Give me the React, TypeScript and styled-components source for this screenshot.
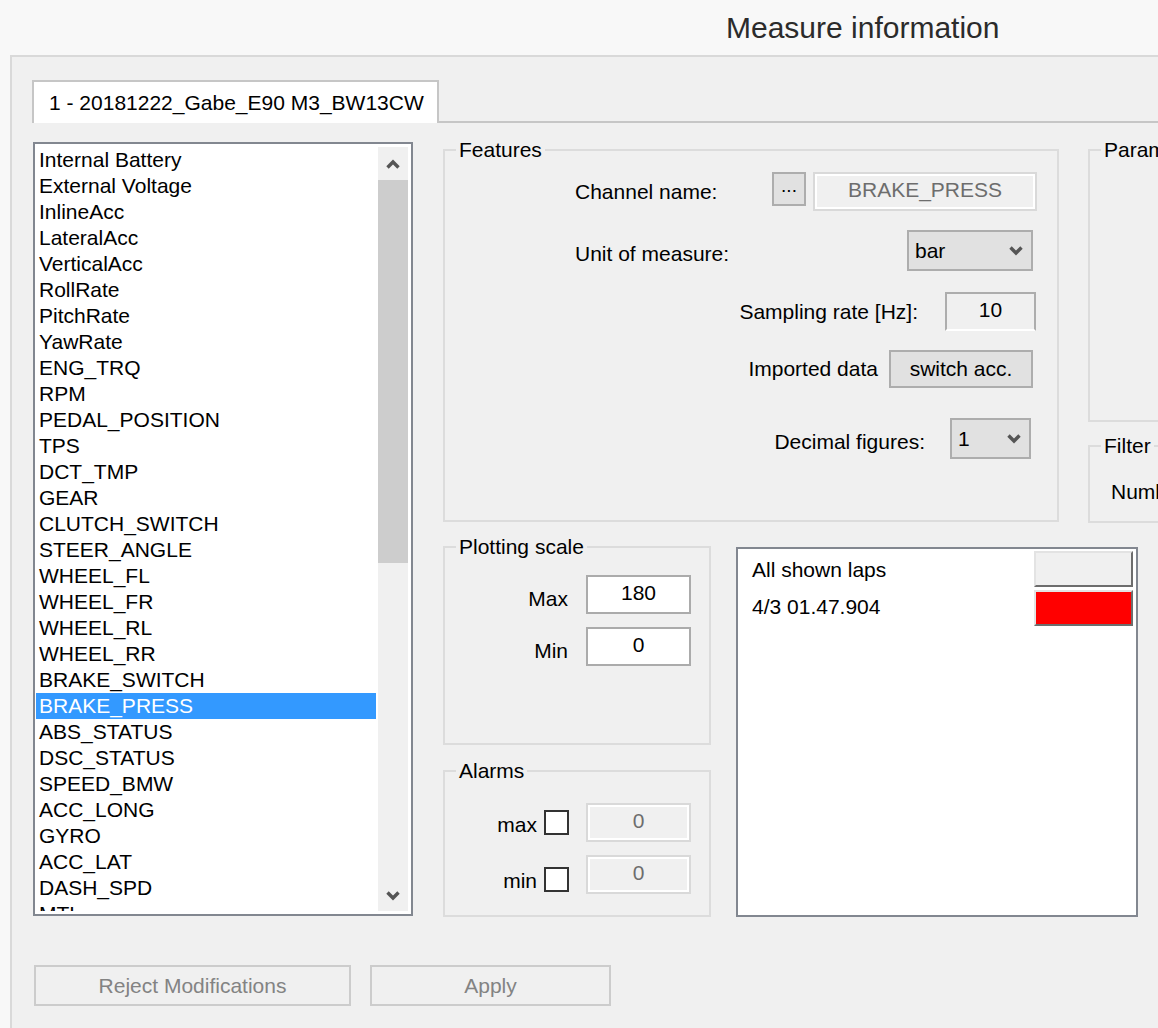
import React from "react";
import styled, { createGlobalStyle } from "styled-components";

const GlobalStyle = createGlobalStyle`
  * { box-sizing: border-box; }
  html, body {
    margin: 0;
    padding: 0;
    background: #f8f8f8;
    overflow: hidden;
  }
  body {
    font-family: Tahoma, "Liberation Sans", Arial, sans-serif;
    font-size: 21px;
    color: #000;
  }
`;

const Page = styled.div`
  width: 1158px;
  height: 1028px;
  overflow: hidden;
  background: #f8f8f8;
`;

const TitleBar = styled.div`
  height: 55px;
  display: flex;
  align-items: center;
  padding-left: 726px;
  font-size: 30px;
  color: #2b2b2b;
  white-space: nowrap;
`;

const Frame = styled.div`
  margin-left: 10px;
  height: 973px;
  background: #f0f0f0;
  border-top: 2px solid #d9d9d9;
  border-left: 2px solid #d9d9d9;
  display: flex;
  flex-direction: column;
  overflow: hidden;
`;

const TabStrip = styled.div`
  display: flex;
  margin-left: 20px;
  padding-top: 23px;
  border-bottom: 2px solid #c6c6c6;
`;

const Tab = styled.div`
  height: 43px;
  margin-bottom: -2px;
  padding: 0 13px 0 15px;
  display: flex;
  align-items: center;
  background: #fff;
  border: 2px solid #c6c6c6;
  border-bottom: none;
  white-space: nowrap;
`;

const Content = styled.div`
  display: flex;
  align-items: flex-start;
  padding: 15px 0 0 21px;
`;

const ListBox = styled.div`
  margin-top: 4px;
  width: 380px;
  height: 774px;
  flex-shrink: 0;
  display: flex;
  background: #fff;
  border: 2px solid #828790;
  padding: 3px 3px 3px 1px;
`;

const Items = styled.div`
  flex: 1;
  overflow: hidden;
`;

const Item = styled.div<{ $selected?: boolean }>`
  height: 26px;
  line-height: 26px;
  padding-left: 3px;
  white-space: nowrap;
  background: ${(p) => (p.$selected ? "#3399ff" : "transparent")};
  color: ${(p) => (p.$selected ? "#fff" : "#000")};
`;

const ScrollBar = styled.div`
  width: 30px;
  margin-left: 2px;
  background: #f0f0f0;
  display: flex;
  flex-direction: column;
`;

const ScrollArrow = styled.div<{ $h: number }>`
  height: ${(p) => p.$h}px;
  display: flex;
  align-items: center;
  justify-content: center;
`;

const Thumb = styled.div`
  height: 383px;
  background: #cdcdcd;
`;

const Track = styled.div`
  flex: 1;
`;

const RightArea = styled.div`
  margin-left: 30px;
  display: flex;
  flex-direction: column;
  flex-shrink: 0;
`;

const HRow = styled.div<{ $top?: number }>`
  display: flex;
  align-items: flex-start;
  margin-top: ${(p) => p.$top ?? 0}px;
`;

const VCol = styled.div<{ $w: number; $left?: number }>`
  width: ${(p) => p.$w}px;
  margin-left: ${(p) => p.$left ?? 0}px;
  display: flex;
  flex-direction: column;
  flex-shrink: 0;
`;

const Group = styled.fieldset<{ $w?: number; $h: number; $top?: number }>`
  margin: ${(p) => p.$top ?? 0}px 0 0 0;
  padding: 0;
  min-width: 0;
  width: ${(p) => (p.$w ? `${p.$w}px` : "auto")};
  height: ${(p) => p.$h}px;
  border: 2px solid #dcdcdc;
  flex-shrink: 0;
`;

const Legend = styled.legend`
  margin-left: 11px;
  padding: 0 3px;
  line-height: 24px;
  font-size: 21px;
  white-space: nowrap;
`;

const FieldRow = styled.div<{ $top: number; $h: number; $right: number; $gap?: number; $left?: number }>`
  display: flex;
  align-items: center;
  justify-content: flex-end;
  height: ${(p) => p.$h}px;
  margin-top: ${(p) => p.$top}px;
  padding-right: ${(p) => p.$right}px;
  padding-left: ${(p) => p.$left ?? 0}px;
  gap: ${(p) => p.$gap ?? 0}px;
  white-space: nowrap;
`;

const Label = styled.span<{ $push?: boolean; $dy?: number }>`
  margin-right: ${(p) => (p.$push ? "auto" : "0")};
  position: relative;
  top: ${(p) => p.$dy ?? 0}px;
`;

const DotsButton = styled.div`
  align-self: flex-start;
  width: 34px;
  height: 34px;
  margin-right: 7px;
  background: #e1e1e1;
  border: 2px solid #adadad;
  display: flex;
  align-items: center;
  justify-content: center;
  padding-bottom: 6px;
  font-size: 19px;
`;

const Field = styled.div<{ $w: number; $h: number; $variant: "disabled" | "plain" | "white" }>`
  width: ${(p) => p.$w}px;
  height: ${(p) => p.$h}px;
  display: flex;
  align-items: center;
  justify-content: center;
  padding-bottom: 4px;
  ${(p) =>
    p.$variant === "disabled"
      ? `background: #f0f0f0; border: 2px solid #d9d9d9; box-shadow: inset 0 0 0 2px #fff; color: #6d6d6d;`
      : p.$variant === "plain"
      ? `background: #f0f0f0; border: 2px solid #adadad; border-bottom-color: #fff; color: #000;`
      : `background: #fff; border: 2px solid #ababab; color: #000;`}
`;

const Combo = styled.div<{ $w: number }>`
  width: ${(p) => p.$w}px;
  height: 41px;
  display: flex;
  align-items: center;
  justify-content: space-between;
  padding: 0 8px 0 6px;
  background: #e1e1e1;
  border: 2px solid #adadad;
`;

const PushButton = styled.div<{ $w: number }>`
  width: ${(p) => p.$w}px;
  height: 38px;
  display: flex;
  align-items: center;
  justify-content: center;
  background: #e1e1e1;
  border: 2px solid #adadad;
`;

const CheckBox = styled.div<{ $dy?: number }>`
  width: 25px;
  height: 25px;
  margin-right: 10px;
  margin-top: ${(p) => p.$dy ?? 0}px;
  background: #fff;
  border: 2px solid #333;
`;

const LineText = styled.div<{ $top: number; $left: number }>`
  margin: ${(p) => p.$top}px 0 0 ${(p) => p.$left}px;
  line-height: 24px;
  white-space: nowrap;
`;

const LapBox = styled.div`
  margin: 12px 0 0 25px;
  width: 402px;
  height: 370px;
  flex-shrink: 0;
  display: flex;
  background: #fff;
  border: 2px solid #828790;
`;

const LapTexts = styled.div`
  flex: 1;
  padding: 2px 0 0 14px;
`;

const LapLine = styled.div`
  height: 37px;
  line-height: 37px;
  white-space: nowrap;
`;

const LapSwatches = styled.div`
  display: flex;
  flex-direction: column;
  gap: 3px;
  padding: 2px 3px 0 0;
`;

const Swatch = styled.div<{ $color: string }>`
  width: 99px;
  height: 36px;
  background: ${(p) => p.$color};
  border: 2px solid;
  border-color: #e3e3e3 #6d6d6d #6d6d6d #e3e3e3;
`;

const Footer = styled.div`
  display: flex;
  gap: 19px;
  margin: 48px 0 0 22px;
`;

const FooterButton = styled.div<{ $w: number }>`
  width: ${(p) => p.$w}px;
  height: 41px;
  display: flex;
  align-items: center;
  justify-content: center;
  background: #f0f0f0;
  border: 2px solid #cccccc;
  color: #838383;
  white-space: nowrap;
`;

const Chevron = ({ up }: { up?: boolean }) => (
  <svg width="14" height="10" viewBox="0 0 14 10">
    <polyline
      points={up ? "1.5,8.5 7,3 12.5,8.5" : "1.5,1.5 7,7 12.5,1.5"}
      fill="none"
      stroke="#555"
      strokeWidth="3.4"
    />
  </svg>
);

const channels = [
  "Internal Battery",
  "External Voltage",
  "InlineAcc",
  "LateralAcc",
  "VerticalAcc",
  "RollRate",
  "PitchRate",
  "YawRate",
  "ENG_TRQ",
  "RPM",
  "PEDAL_POSITION",
  "TPS",
  "DCT_TMP",
  "GEAR",
  "CLUTCH_SWITCH",
  "STEER_ANGLE",
  "WHEEL_FL",
  "WHEEL_FR",
  "WHEEL_RL",
  "WHEEL_RR",
  "BRAKE_SWITCH",
  "BRAKE_PRESS",
  "ABS_STATUS",
  "DSC_STATUS",
  "SPEED_BMW",
  "ACC_LONG",
  "GYRO",
  "ACC_LAT",
  "DASH_SPD",
  "MTL",
];

const App = () => {
  const selected = "BRAKE_PRESS";

  return (
    <Page>
      <GlobalStyle />
      <TitleBar>Measure information</TitleBar>
      <Frame>
        <TabStrip>
          <Tab>1 - 20181222_Gabe_E90 M3_BW13CW</Tab>
        </TabStrip>

        <Content>
          <ListBox>
            <Items>
              {channels.map((c) => (
                <Item key={c} $selected={c === selected}>
                  {c}
                </Item>
              ))}
            </Items>
            <ScrollBar>
              <ScrollArrow $h={33}>
                <Chevron up />
              </ScrollArrow>
              <Thumb />
              <Track />
              <ScrollArrow $h={31}>
                <Chevron />
              </ScrollArrow>
            </ScrollBar>
          </ListBox>

          <RightArea>
            <HRow>
              <Group $w={616} $h={384}>
                <Legend>Features</Legend>
                <FieldRow $top={10} $h={39} $right={20} $left={130}>
                  <Label $push>Channel name:</Label>
                  <DotsButton>...</DotsButton>
                  <Field $w={224} $h={39} $variant="disabled">
                    BRAKE_PRESS
                  </Field>
                </FieldRow>
                <FieldRow $top={19} $h={41} $right={24} $left={130}>
                  <Label $push $dy={3}>
                    Unit of measure:
                  </Label>
                  <Combo $w={126}>
                    <span>bar</span>
                    <Chevron />
                  </Combo>
                </FieldRow>
                <FieldRow $top={21} $h={39} $right={21} $gap={27}>
                  <Label>Sampling rate [Hz]:</Label>
                  <Field $w={91} $h={39} $variant="plain">
                    10
                  </Field>
                </FieldRow>
                <FieldRow $top={19} $h={38} $right={24} $gap={11}>
                  <Label>Imported data</Label>
                  <PushButton $w={144}>switch acc.</PushButton>
                </FieldRow>
                <FieldRow $top={30} $h={41} $right={26} $gap={25}>
                  <Label $dy={3}>Decimal figures:</Label>
                  <Combo $w={81}>
                    <span>1</span>
                    <Chevron />
                  </Combo>
                </FieldRow>
              </Group>

              <VCol $w={220} $left={29}>
                <Group $h={284}>
                  <Legend>Parameters</Legend>
                </Group>
                <Group $h={89} $top={12}>
                  <Legend>Filter</Legend>
                  <LineText $top={22} $left={21}>
                    Number of points
                  </LineText>
                </Group>
              </VCol>
            </HRow>

            <HRow $top={12}>
              <VCol $w={268}>
                <Group $h={210}>
                  <Legend>Plotting scale</Legend>
                  <FieldRow $top={16} $h={39} $right={18} $gap={18}>
                    <Label $dy={4}>Max</Label>
                    <Field $w={105} $h={39} $variant="white">
                      180
                    </Field>
                  </FieldRow>
                  <FieldRow $top={13} $h={39} $right={18} $gap={18}>
                    <Label $dy={4}>Min</Label>
                    <Field $w={105} $h={39} $variant="white">
                      0
                    </Field>
                  </FieldRow>
                </Group>
                <Group $h={158} $top={14}>
                  <Legend>Alarms</Legend>
                  <FieldRow $top={20} $h={39} $right={18} $gap={7}>
                    <Label $dy={2}>max</Label>
                    <CheckBox />
                    <Field $w={105} $h={39} $variant="disabled">
                      0
                    </Field>
                  </FieldRow>
                  <FieldRow $top={13} $h={39} $right={18} $gap={7}>
                    <Label $dy={6}>min</Label>
                    <CheckBox $dy={10} />
                    <Field $w={105} $h={39} $variant="disabled">
                      0
                    </Field>
                  </FieldRow>
                </Group>
              </VCol>

              <LapBox>
                <LapTexts>
                  <LapLine>All shown laps</LapLine>
                  <LapLine>4/3 01.47.904</LapLine>
                </LapTexts>
                <LapSwatches>
                  <Swatch $color="#f0f0f0" />
                  <Swatch $color="#ff0000" />
                </LapSwatches>
              </LapBox>
            </HRow>
          </RightArea>
        </Content>

        <Footer>
          <FooterButton $w={317}>Reject Modifications</FooterButton>
          <FooterButton $w={241}>Apply</FooterButton>
        </Footer>
      </Frame>
    </Page>
  );
};

export default App;
